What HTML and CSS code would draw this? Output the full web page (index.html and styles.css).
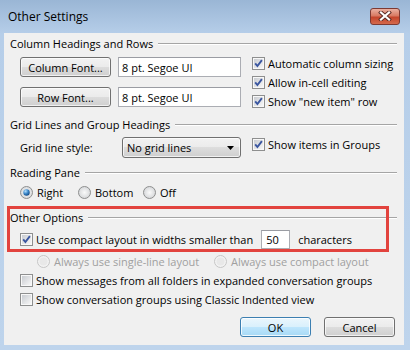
FILE: index.html
```html
<!DOCTYPE html>
<html lang="en">
<head>
    <meta charset="UTF-8">
    <title>Other Settings</title>
    <link rel="stylesheet" href="styles.css">
</head>
<body>
    <!-- shared glyphs for checkboxes and radios -->
    <svg class="defs" aria-hidden="true">
        <defs>
            <linearGradient id="boxFill" x1="0" y1="0" x2="1" y2="1">
                <stop offset="0" stop-color="#c9ccd1"/>
                <stop offset="1" stop-color="#f7f7f7"/>
            </linearGradient>
            <radialGradient id="radioFill" cx="0.5" cy="0.5" r="0.6">
                <stop offset="0" stop-color="#fafafa"/>
                <stop offset="1" stop-color="#cfd1d4"/>
            </radialGradient>
            <radialGradient id="dotFill" cx="0.35" cy="0.3" r="0.8">
                <stop offset="0" stop-color="#b4e0ff"/>
                <stop offset="0.5" stop-color="#3a86c8"/>
                <stop offset="1" stop-color="#0d3f78"/>
            </radialGradient>
            <symbol id="cb-off" viewBox="0 0 13 13">
                <rect x="0.5" y="0.5" width="12" height="12" fill="#f8f8f8" stroke="#8e8f8f"/>
                <rect x="2" y="2" width="9" height="9" fill="url(#boxFill)"/>
            </symbol>
            <symbol id="cb-on" viewBox="0 0 13 13">
                <rect x="0.5" y="0.5" width="12" height="12" fill="#f8f8f8" stroke="#8e8f8f"/>
                <rect x="2" y="2" width="9" height="9" fill="url(#boxFill)"/>
                <path d="M3.2 6.4 L5.4 9 L9.9 3.1" fill="none" stroke="#3a56a0" stroke-width="1.9"/>
            </symbol>
            <symbol id="rb-off" viewBox="0 0 13 13">
                <circle cx="6.5" cy="6.5" r="6" fill="url(#radioFill)" stroke="#8e8f8f"/>
            </symbol>
            <symbol id="rb-on" viewBox="0 0 13 13">
                <circle cx="6.5" cy="6.5" r="6" fill="url(#radioFill)" stroke="#8e8f8f"/>
                <circle cx="6.5" cy="6.5" r="3.2" fill="url(#dotFill)"/>
            </symbol>
            <symbol id="rb-dis" viewBox="0 0 13 13">
                <circle cx="6.5" cy="6.5" r="6" fill="#f2f2f2" stroke="#c6c6c6"/>
                <circle cx="6.5" cy="6.5" r="4" fill="#e8e8e8"/>
            </symbol>
        </defs>
    </svg>

    <div class="window">
        <!-- Title bar -->
        <div class="titlebar">
            <span class="title">Other Settings</span>
            <span class="close">
                <svg width="14" height="10" viewBox="0 0 14 10">
                    <path d="M3 1.5 L11 8.5 M11 1.5 L3 8.5" stroke="#5a2a24" stroke-width="4" stroke-linecap="square"/>
                    <path d="M3 1.5 L11 8.5 M11 1.5 L3 8.5" stroke="#ffffff" stroke-width="2.2" stroke-linecap="square"/>
                </svg>
            </span>
        </div>

        <!-- Dialog body -->
        <div class="client">
            <div class="heading">Column Headings and Rows</div>
            <div class="group-row">
                <div class="fonts">
                    <div class="font-row">
                        <span class="btn">Column Font...</span>
                        <span class="field">8 pt. Segoe UI</span>
                    </div>
                    <div class="font-row">
                        <span class="btn">Row Font...</span>
                        <span class="field">8 pt. Segoe UI</span>
                    </div>
                </div>
                <div class="checks">
                    <div class="check"><svg class="box"><use href="#cb-on"/></svg>Automatic column sizing</div>
                    <div class="check"><svg class="box"><use href="#cb-on"/></svg>Allow in-cell editing</div>
                    <div class="check"><svg class="box"><use href="#cb-on"/></svg>Show "new item" row</div>
                </div>
            </div>

            <div class="heading heading-grid">Grid Lines and Group Headings</div>
            <div class="grid-row">
                <span class="grid-label">Grid line style:</span>
                <span class="dropdown">No grid lines
                    <svg width="7" height="4" viewBox="0 0 7 4"><path d="M0 0 H7 L3.5 4 Z" fill="#000"/></svg>
                </span>
                <div class="check check-groups"><svg class="box"><use href="#cb-on"/></svg>Show items in Groups</div>
            </div>

            <div class="heading heading-pane">Reading Pane</div>
            <div class="radio-row">
                <span class="radio radio-right"><svg class="box"><use href="#rb-on"/></svg>Right</span>
                <span class="radio radio-bottom"><svg class="box"><use href="#rb-off"/></svg>Bottom</span>
                <span class="radio"><svg class="box"><use href="#rb-off"/></svg>Off</span>
            </div>

            <div class="heading heading-other">Other Options</div>
            <div class="compact-row">
                <svg class="box"><use href="#cb-on"/></svg>Use compact layout in widths smaller than
                <span class="field field-small">50</span>characters
            </div>
            <div class="radio-row disabled-row">
                <span class="radio radio-single"><svg class="box"><use href="#rb-dis"/></svg>Always use single-line layout</span>
                <span class="radio"><svg class="box"><use href="#rb-dis"/></svg>Always use compact layout</span>
            </div>
            <div class="check check-wide check-first"><svg class="box"><use href="#cb-off"/></svg>Show messages from all folders in expanded conversation groups</div>
            <div class="check check-wide"><svg class="box"><use href="#cb-off"/></svg>Show conversation groups using Classic Indented view</div>

            <div class="actions">
                <span class="btn btn-default">OK</span>
                <span class="btn">Cancel</span>
            </div>

            <!-- highlight frame drawn over the dialog -->
            <div class="highlight"></div>
        </div>
    </div>
</body>
</html>
```

FILE: styles.css
```css
/* Basic styling */
body {
    margin: 0;
    font-family: "Segoe UI", "Open Sans", sans-serif;
    font-size: 11px;
    color: #000;
}

.defs {
    position: absolute;
    width: 0;
    height: 0;
}

.window {
    width: 410px;
    height: 350px;
    background: linear-gradient(#9ab6d5, #b6cee9 34px, #bed4ec);
    display: flex;
    flex-direction: column;
}

/* Title bar */
.titlebar {
    height: 33px;
    display: flex;
    align-items: center;
    justify-content: space-between;
    padding: 0 10px 0 8px;
    box-sizing: border-box;
}

.title {
    font-size: 12px;
    margin-top: -1px;
}

.close {
    width: 30px;
    height: 17px;
    box-sizing: border-box;
    border: 1px solid #7d3a33;
    border-radius: 3px;
    background: linear-gradient(#eab0a1, #d87a63 45%, #c4452c 55%, #d46a4c);
    display: flex;
    align-items: center;
    justify-content: center;
    margin-top: -1px;
}

/* Dialog body */
.client {
    position: relative;
    margin: 0 6px 0 4px;
    height: 312px;
    padding-top: 3px;
    box-sizing: border-box;
    background-color: #f0f0f0;
}

.heading {
    display: flex;
    align-items: center;
    height: 15px;
    padding-left: 6px;
    margin-right: 7px;
}

.heading::after {
    content: "";
    flex: 1;
    margin-left: 5px;
    border-top: 1px solid #a5a5a5;
    border-bottom: 1px solid #fff;
}

.heading-grid {
    margin-top: 6px;
}

.heading-pane {
    margin-top: 7px;
}

.heading-other {
    margin-top: 9px;
}

.group-row {
    display: flex;
    align-items: flex-start;
}

.fonts {
    margin: 6px 0 0 16px;
}

.font-row {
    display: flex;
    gap: 7px;
    margin-bottom: 10px;
}

.font-row:last-child {
    margin-bottom: 0;
}

.btn {
    width: 91px;
    height: 20px;
    box-sizing: border-box;
    border: 1px solid #707070;
    border-radius: 3px;
    background: linear-gradient(#f2f2f2, #ebebeb 50%, #dddddd 50%, #cfcfcf);
    display: flex;
    align-items: center;
    justify-content: center;
    box-shadow: inset 0 0 0 1px rgba(255, 255, 255, 0.7);
}

.field {
    width: 123px;
    height: 20px;
    box-sizing: border-box;
    border: 1px solid #abadb3;
    border-top-color: #9a9ca3;
    background-color: #fff;
    padding-left: 3px;
    display: flex;
    align-items: center;
}

.field-small {
    width: 29px;
    height: 19px;
    margin: 0 8px 0 8px;
    padding-left: 4px;
}

.checks {
    margin: 3px 0 0 11px;
}

.check {
    display: flex;
    align-items: center;
    height: 19px;
}

.box {
    width: 13px;
    height: 13px;
    flex: none;
    margin-right: 3px;
}

/* Grid lines row */
.grid-row {
    display: flex;
    align-items: center;
    margin-top: 5px;
}

.grid-label {
    width: 118px;
    padding-left: 16px;
    box-sizing: border-box;
}

.dropdown {
    width: 119px;
    height: 21px;
    box-sizing: border-box;
    border: 1px solid #707070;
    border-radius: 3px;
    background: linear-gradient(#f2f2f2, #ebebeb 50%, #dddddd 50%, #cfcfcf);
    box-shadow: inset 0 0 0 1px rgba(255, 255, 255, 0.7);
    display: flex;
    align-items: center;
    justify-content: space-between;
    padding: 0 6px 0 4px;
}

.check-groups {
    align-self: flex-start;
    height: 15px;
    margin-left: 11px;
}

/* Radio rows */
.radio-row {
    display: flex;
    align-items: center;
    height: 18px;
    margin-top: 3px;
    padding-left: 16px;
}

.radio {
    display: flex;
    align-items: center;
}

.radio .box {
    margin-right: 4px;
}

.radio-right {
    width: 58px;
}

.radio-bottom {
    width: 65px;
}

.compact-row {
    display: flex;
    align-items: center;
    height: 19px;
    margin-top: 5px;
    padding-left: 16px;
}

.disabled-row {
    height: 16px;
    margin-top: 4px;
    padding-left: 33px;
    color: #a0a0a0;
}

.radio-single {
    width: 177px;
}

.check-wide {
    padding-left: 16px;
}

.check-first {
    margin-top: 2px;
}

/* Buttons at the bottom */
.actions {
    display: flex;
    justify-content: flex-end;
    gap: 13px;
    margin: 8px 9px 0 0;
}

.actions .btn {
    width: 71px;
}

.btn-default {
    border-color: #3c7fb1;
    background: linear-gradient(#eaf6fd, #d9f0fc 50%, #bee6fd 50%, #a7d9f5);
    box-shadow: inset 0 0 0 1px rgba(255, 255, 255, 0.8);
}

/* Red annotation frame */
.highlight {
    position: absolute;
    left: 3px;
    top: 173px;
    width: 382px;
    height: 46px;
    box-sizing: border-box;
    border: 3px solid #e2433e;
}
```
